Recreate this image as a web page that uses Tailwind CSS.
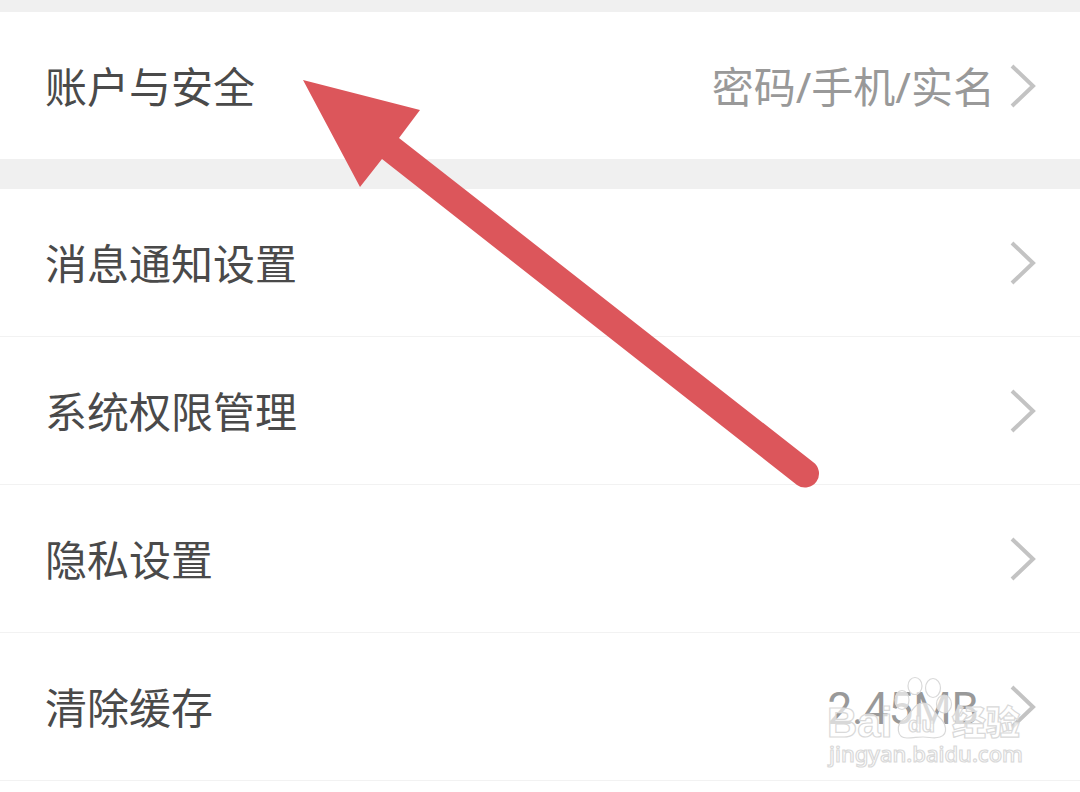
<!DOCTYPE html>
<html lang="zh-CN">
<head>
    <meta charset="UTF-8">
    <meta name="viewport" content="width=device-width, initial-scale=1.0">
    <title>设置</title>
    <script src="https://cdn.jsdelivr.net/npm/@tailwindcss/browser@4"></script>
</head>
<body class="bg-white font-['Noto_Sans_CJK_SC',sans-serif] text-[42px] leading-[60px] text-[#4a4a4a]">
    <main class="relative overflow-hidden">
        <!-- Account -->
        <section class="border-t-12 border-[#f0f0f0]">
            <a href="#account" class="flex items-center justify-between h-[147px] pl-[45px] pr-11">
                <span class="pb-0.5">账户与安全</span>
                <span class="flex items-center gap-3.5 text-[#999999]">
                    <span class="pt-0.5 font-['Noto_Sans','Noto_Sans_CJK_SC',sans-serif]">密码/手机/实名</span>
                    <svg class="w-[27px] h-11" viewBox="0 0 27 44" fill="none" stroke="#c3c3c3" stroke-width="4"><path d="M3 2 L24 22 L3 42"/></svg>
                </span>
            </a>
        </section>

        <!-- General settings -->
        <section class="border-t-30 border-[#f0f0f0]">
            <a href="#notice" class="flex items-center justify-between h-[148px] pl-[45px] pr-11 border-b border-[#f2f2f2]">
                <span class="pb-0.5">消息通知设置</span>
                <svg class="w-[27px] h-11" viewBox="0 0 27 44" fill="none" stroke="#c3c3c3" stroke-width="4"><path d="M3 2 L24 22 L3 42"/></svg>
            </a>
            <a href="#permission" class="flex items-center justify-between h-[148px] pl-[45px] pr-11 border-b border-[#f2f2f2]">
                <span class="pb-0.5">系统权限管理</span>
                <svg class="w-[27px] h-11" viewBox="0 0 27 44" fill="none" stroke="#c3c3c3" stroke-width="4"><path d="M3 2 L24 22 L3 42"/></svg>
            </a>
            <a href="#privacy" class="flex items-center justify-between h-[148px] pl-[45px] pr-11 border-b border-[#f2f2f2]">
                <span class="pb-0.5">隐私设置</span>
                <svg class="w-[27px] h-11" viewBox="0 0 27 44" fill="none" stroke="#c3c3c3" stroke-width="4"><path d="M3 2 L24 22 L3 42"/></svg>
            </a>
            <a href="#cache" class="relative flex items-center justify-between h-[148px] pl-[45px] pr-11 border-b border-[#f2f2f2]">
                <span class="pb-0.5">清除缓存</span>
                <span class="flex items-center gap-[30px] text-[#999999]">
                    <span class="pt-1 font-[Roboto,sans-serif] text-[44px]">2.45MB</span>
                    <svg class="w-[27px] h-11" viewBox="0 0 27 44" fill="none" stroke="#c3c3c3" stroke-width="4"><path d="M3 2 L24 22 L3 42"/></svg>
                </span>

                <!-- Watermark -->
                <svg class="absolute right-[50px] top-10 w-[210px] h-[100px]" viewBox="0 0 210 100" fill="#ffffff" fill-opacity="0.65" stroke="#d9d9d9" stroke-width="1.2">
                    <text x="7" y="64" class="font-['Liberation_Sans',sans-serif] font-bold text-[42px]">Bai</text>
                    <ellipse cx="95" cy="13" rx="7" ry="8.5"/>
                    <ellipse cx="113" cy="15" rx="7.5" ry="9.5"/>
                    <ellipse cx="82" cy="27" rx="7" ry="9.5"/>
                    <ellipse cx="124" cy="31" rx="7.5" ry="9"/>
                    <path d="M103 30 C94 30 92 40 84 46 C75 52 77 65 87 65 C94 65 97 64 103 64 C110 64 114 66 120 64 C129 61 126 50 119 44 C112 38 112 30 103 30 Z"/>
                    <text x="88" y="59" class="font-['Liberation_Sans',sans-serif] font-bold text-[22px]">du</text>
                    <text x="132" y="62" class="font-['Noto_Sans_CJK_SC',sans-serif] font-black text-[34px]">经验</text>
                    <text x="9" y="89" class="font-['Noto_Sans',sans-serif] font-medium text-[22px]">jingyan.baidu.com</text>
                </svg>
            </a>
        </section>

        <!-- Pointer arrow -->
        <svg class="absolute left-[302px] top-[79px] w-[518px] h-[409px]" viewBox="302 79 518 409" fill="#dc565b">
            <path d="M303 80 L420 110 L399 138 L813 462 A14 14 0 0 1 797 485 L382 159 L360 187 Z"/>
        </svg>
    </main>
</body>
</html>
